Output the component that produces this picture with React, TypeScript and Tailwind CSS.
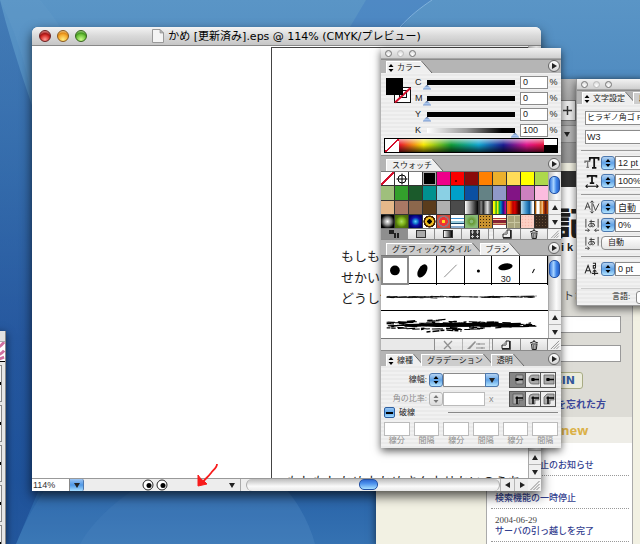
import { useState } from "react";
import type { ReactNode } from "react";
import clsx from "clsx";

const swatches = [
  { name: "None", fill: "bg-[linear-gradient(to_top_left,#fff_46%,#d40f2c_46%_54%,#fff_54%)]" },
  { name: "Registration", fill: "bg-white", target: true },
  { name: "White", fill: "bg-white" },
  { name: "Black", fill: "bg-black", selected: true },
  { name: "Magenta", fill: "bg-[#ee008a]" },
  { name: "Red", fill: "bg-[#fb0000]", dot: true },
  { name: "Dark red", fill: "bg-[#8a0b0b]" },
  { name: "Orange", fill: "bg-[#ff8000]" },
  { name: "Ochre", fill: "bg-[#ebb02c]" },
  { name: "Sand", fill: "bg-[#ffdc58]" },
  { name: "Yellow", fill: "bg-[#ffff00]" },
  { name: "Lime", fill: "bg-[#add84c]" },
  { name: "Sage", fill: "bg-[#9fbf7c]" },
  { name: "Green", fill: "bg-[#33a02c]" },
  { name: "Forest", fill: "bg-[#1b5a2b]" },
  { name: "Teal", fill: "bg-[#00918f]" },
  { name: "Sky", fill: "bg-[#8ad0e4]" },
  { name: "Cyan", fill: "bg-[#00a0c8]" },
  { name: "Blue", fill: "bg-[#0b50a2]" },
  { name: "Slate", fill: "bg-[#648285]" },
  { name: "Lavender", fill: "bg-[#9099c8]" },
  { name: "Purple", fill: "bg-[#821485]" },
  { name: "Orchid", fill: "bg-[#cc80bf]" },
  { name: "Pink", fill: "bg-[#fbbcdf]" },
  { name: "Peach", fill: "bg-[#e6b88a]" },
  { name: "Clay", fill: "bg-[#aa7864]" },
  { name: "Brown", fill: "bg-[#8c674c]" },
  { name: "Umber", fill: "bg-[#5a3c1c]" },
  { name: "Gray", fill: "bg-[#b0b0b0]" },
  { name: "Dark gray", fill: "bg-[#4b4b4b]" },
  { name: "Fade", fill: "bg-[linear-gradient(to_right,#fff,#000)]" },
  { name: "Steel", fill: "bg-[linear-gradient(to_right,#222,#888,#222,#999,#ddd,#777,#333)]" },
  { name: "Rainbow", fill: "bg-[linear-gradient(to_right,#ff0_10%,#2a2_25%,#fe0_35%,#0a4_50%,#08c_60%,#118_78%,#e08)]" },
  { name: "Fire", fill: "bg-[linear-gradient(to_right,#e63,#f60_20%,#b00_45%,#d00_60%,#400_90%)]" },
  { name: "Chrome", fill: "bg-[linear-gradient(to_right,#bde,#3a8fc8_40%,#0b5a9a_65%,#fff_90%)]" },
  { name: "Copper", fill: "bg-[linear-gradient(to_right,#a50_5%,#fff_15%_30%,#b60_45%,#fda_55%,#c50_65%,#611_80%,#b50)]" },
  { name: "White glow", fill: "bg-[radial-gradient(circle,#fff,#888_40%,#000_75%)]" },
  { name: "Green glow", fill: "bg-[radial-gradient(circle,#ad6,#8b2_30%,#691_50%,#571_60%,#460)]" },
  { name: "Blue glow", fill: "bg-[radial-gradient(circle,#6cf,#17c_25%,#11a_45%,#006_75%)]" },
  { name: "Sunflower", fill: "bg-[radial-gradient(circle,#000_22%,#eb2_26%_46%,#420_50%_64%,#fff_68%)]" },
  { name: "Flower", fill: "bg-[radial-gradient(circle,#fd2_15%,#e33_22%_45%,#789_50%,#d43_75%)]" },
  { name: "Stripes", fill: "bg-[linear-gradient(#fff_22%,#3a8fd0_22%_34%,#fff_34%_44%,#9cd_44%_64%,#146_64%_72%,#fff_72%_82%,#8ac_82%)]" },
  { name: "Leaves", fill: "bg-[radial-gradient(circle,#8b7_15%,#693_25%,#7a5_45%,#8b7_65%)]" },
  { name: "Leopard", fill: "bg-[radial-gradient(circle,#33210c_35%,#c8922f_45%)] bg-[size:3px_3px]" },
  { name: "Border", fill: "bg-[linear-gradient(#fff_20%,#a33_20%_28%,#fda_28%_36%,#823_36%_62%,#da7_62%_70%,#a44_70%_78%,#fff_78%)]" },
  { name: "Tiles", fill: "bg-[linear-gradient(#c9c6a0_1px,transparent_1px),linear-gradient(to_right,#c9c6a0_1px,#a9a57c_1px)] bg-[size:7px_7px]" },
  { name: "Blossom", fill: "bg-[radial-gradient(circle,#f6b7ab_30%,#fccfc4_50%)] bg-[size:3px_3px]" },
  { name: "Bark", fill: "bg-[radial-gradient(circle,#69503a_25%,#37271c_45%)] bg-[size:3px_3px]" },
];

const news = [
  { date: "2004-07-12", title: "サービス停止のお知らせ" },
  { date: "2004-07-03", title: "検索機能の一時停止" },
  { date: "2004-06-29", title: "サーバの引っ越しを完了" },
];

const dashLabels = ["線分", "間隔", "線分", "間隔", "線分", "間隔"];

// rough strokes used as artwork for the two art brushes
function roughStroke(count: number, width: number, spread: number, seed: number) {
  let s = seed;
  const rnd = () => {
    s = (s * 16807) % 2147483647;
    return s / 2147483647;
  };
  let d = "";
  for (let i = 0; i < count; i++) {
    const t = rnd();
    const x = t * width;
    const half = spread * (0.35 + 0.65 * Math.sin(Math.PI * Math.min(1, t + 0.12)));
    const y = 10 + (rnd() - 0.5) * 2 * half;
    const len = 2 + rnd() * 9;
    d += `M${x.toFixed(1)} ${y.toFixed(1)}l${len.toFixed(1)} ${(rnd() - 0.6).toFixed(1)}`;
  }
  return d;
}

function Triangle({ dir = "down" }: { dir?: "up" | "down" | "left" | "right" }) {
  const paths = {
    up: "M1 6L4 1L7 6Z",
    down: "M1 2L4 7L7 2Z",
    left: "M6 1L1 4L6 7Z",
    right: "M2 1L7 4L2 7Z",
  };
  return (
    <svg viewBox="0 0 8 8" className="w-2 h-2" aria-hidden="true">
      <path d={paths[dir]} fill="#222" />
    </svg>
  );
}

function UpDown({ className }: { className?: string }) {
  return (
    <svg viewBox="0 0 6 10" className={clsx("w-[6px] h-[10px] shrink-0", className)} aria-hidden="true">
      <path d="M0.5 4L3 1L5.5 4ZM0.5 6L3 9L5.5 6Z" fill="currentColor" />
    </svg>
  );
}

function Stepper({ label, disabled }: { label: string; disabled?: boolean }) {
  return (
    <button
      aria-label={label}
      disabled={disabled}
      className={clsx(
        "w-[14px] h-[14px] shrink-0 rounded-[3px] border flex items-center justify-center",
        disabled
          ? "border-[#b5b5b5] bg-[linear-gradient(#f4f4f4,#dcdcdc)] text-[#777]"
          : "border-[#4d78ae] bg-[linear-gradient(#b5d3f2,#5fa2e6_50%,#b3e4ff)] text-black"
      )}
    >
      <UpDown />
    </button>
  );
}

function PanelTitle() {
  return (
    <div className="h-[11px] flex items-center gap-[5px] pl-1 bg-[linear-gradient(#f2f2f2,#cfcfcf)] border-b border-[#a5a5a5]">
      {["Close", "Minimize", "Zoom"].map((name) => (
        <button
          key={name}
          aria-label={name}
          className={clsx(
            "w-[7px] h-[7px] rounded-full border bg-[radial-gradient(circle_at_50%_80%,#fff,#d2d2d2)]",
            name === "Minimize" ? "border-[#bbb]" : "border-[#777]"
          )}
        />
      ))}
    </div>
  );
}

function Tab({ label, active, arrows }: { label: string; active?: boolean; arrows?: boolean }) {
  return (
    <button role="tab" aria-selected={!!active} className="flex items-end shrink-0 h-[12px] -mr-1">
      <span
        className={clsx(
          "flex items-center gap-[3px] h-[12px] text-[8px] leading-[12px] text-[#222] border-t border-l border-white whitespace-nowrap",
          arrows ? "pl-[1px]" : "pl-[5px]",
          active ? "bg-[#efefef]" : "bg-[#cdcdcd]"
        )}
      >
        {arrows && <UpDown className="text-black" />}
        {label}
      </span>
      <svg viewBox="0 0 12 12" className="w-[12px] h-[12px]" aria-hidden="true">
        <path d="M0 0H1L11 12H0Z" fill={active ? "#efefef" : "#cdcdcd"} />
        <path d="M0.5 0L11 12" stroke="#666" strokeWidth="1" />
      </svg>
    </button>
  );
}

function TabStrip({ children, tall }: { children: ReactNode; tall?: boolean }) {
  return (
    <div
      className={clsx(
        "flex items-end bg-[#b5b5b5] border-t border-[#8b8b8b] pl-[5px]",
        tall ? "h-[16px]" : "h-[14px]"
      )}
    >
      <div role="tablist" className="flex flex-1 min-w-0">
        {children}
      </div>
      <button
        aria-label="Panel menu"
        className="w-[12px] h-[12px] shrink-0 mr-[1px] mb-[1px] rounded-full border border-[#666] bg-[linear-gradient(#fff,#d5d5d5)] flex items-center justify-center"
      >
        <Triangle dir="right" />
      </button>
    </div>
  );
}

function VScroll({ thumb }: { thumb: string }) {
  return (
    <div className="w-[13px] shrink-0 flex flex-col bg-[linear-gradient(to_right,#c4c4c4,#fbfbfb_60%,#e2e2e2)] border-l border-[#a9a9a9]">
      <div className="flex-1 pt-1">
        <div
          className={clsx(
            "w-[11px] rounded-[5px] border border-[#2352a5] bg-[linear-gradient(to_right,#3a7be0,#a8d4ff_40%,#3f86ea_70%,#2a62c8)]",
            thumb
          )}
        />
      </div>
      <button aria-label="Scroll up" className="h-[14px] flex items-center justify-center bg-[#f0f0f0] border-t border-[#b5b5b5]">
        <Triangle dir="up" />
      </button>
      <button aria-label="Scroll down" className="h-[14px] flex items-center justify-center bg-[#f0f0f0] border-t border-[#b5b5b5]">
        <Triangle dir="down" />
      </button>
    </div>
  );
}

function Grip() {
  return (
    <svg viewBox="0 0 12 12" className="w-[13px] h-full shrink-0 bg-[#f3f3f3]" aria-hidden="true">
      <path d="M2 11L11 2M5 11L11 5M8 11L11 8" stroke="#888" strokeWidth="1" />
    </svg>
  );
}

const newIcon = (
  <svg viewBox="0 0 10 10" className="w-[10px] h-[10px]" aria-hidden="true">
    <path d="M1 5V8.500H8.500V1H5V5Z" fill="#eee" stroke="#222" />
    <path d="M1 5L5 1V5Z" fill="#999" />
    <path d="M1 9H9V1" stroke="#222" strokeWidth="1.500" fill="none" />
  </svg>
);

const trashIcon = (
  <svg viewBox="0 0 10 10" className="w-[10px] h-[10px]" aria-hidden="true">
    <path d="M1 3L5 1.500L9 3M4 1H6" stroke="#222" fill="none" />
    <path d="M2.500 4H8L7.300 9.500H3.200Z" fill="#ddd" stroke="#222" />
    <path d="M4.300 5V9M6.100 5V9" stroke="#333" strokeWidth="0.8" />
  </svg>
);

function ToolButton({ label, pressed, disabled, children }: { label: string; pressed?: boolean; disabled?: boolean; children: ReactNode }) {
  return (
    <button
      aria-label={label}
      disabled={disabled}
      className={clsx(
        "flex-1 flex items-center justify-center border-r border-[#8f8f8f]",
        pressed ? "bg-[#8e8e8e]" : "bg-[linear-gradient(#f5f5f5,#dedede)]",
        disabled && "opacity-60"
      )}
    >
      {children}
    </button>
  );
}

function ColorSection() {
  const [cmyk, setCmyk] = useState({ C: 0, M: 0, Y: 0, K: 100 });

  return (
    <div className="pt-[1px] pb-[2px] px-[3px]">
      <div className="flex">
        <svg viewBox="0 0 26 26" className="w-[26px] h-[26px] mt-1 ml-[2px] shrink-0" aria-hidden="true">
          <rect x="8.5" y="9.5" width="16" height="15" fill="#fff" stroke="#111" />
          <rect x="13.5" y="12.500" width="7" height="7" fill="#fff" stroke="#111" />
          <path d="M9 24.500L24.500 10" stroke="#d40f2c" strokeWidth="2" />
          <rect width="17" height="17" fill="#000" />
        </svg>
        <div className="flex-1 min-w-0 pl-[3px]">
          {(Object.keys(cmyk) as (keyof typeof cmyk)[]).map((key) => (
            <div key={key} className="h-[16px] flex items-center text-[9px] leading-[12px] text-[#222]">
              <label htmlFor={`num-${key}`} className="w-[8px]">
                {key}
              </label>
              <input
                type="range"
                aria-label={key}
                value={cmyk[key]}
                onChange={(e) => setCmyk({ ...cmyk, [key]: Number(e.target.value) })}
                className={clsx(
                  "appearance-none flex-1 min-w-0 h-[10px] mt-[5px] bg-no-repeat bg-top bg-[size:calc(100%-8px)_5px]",
                  "[&::-webkit-slider-runnable-track]:h-[10px]",
                  "[&::-webkit-slider-thumb]:appearance-none [&::-webkit-slider-thumb]:w-[8px] [&::-webkit-slider-thumb]:h-[5px] [&::-webkit-slider-thumb]:mt-[5px]",
                  "[&::-webkit-slider-thumb]:bg-[linear-gradient(#5c74a0,#a9c6ee_50%,#6f8fc4)] [&::-webkit-slider-thumb]:[clip-path:polygon(50%_0,100%_80%,100%_100%,0_100%,0_80%)]",
                  key === "K"
                    ? "bg-[linear-gradient(to_right,#fff,#999_45%,#000_85%)]"
                    : "bg-[linear-gradient(#000,#000)]"
                )}
              />
              <input
                id={`num-${key}`}
                value={cmyk[key]}
                onChange={(e) => setCmyk({ ...cmyk, [key]: Number(e.target.value) || 0 })}
                className="w-[28px] h-[13px] ml-[1px] pl-[2px] bg-white border border-[#8b8b8b] text-[9px] leading-[11px]"
              />
              <span className="w-[9px] ml-[1px] shrink-0 text-center">%</span>
            </div>
          ))}
        </div>
      </div>
      <div className="h-[15px] flex border border-black bg-black">
        <div className="w-[14px] bg-[linear-gradient(to_top_left,#fff_46%,#d40f2c_46%_54%,#fff_54%)]" />
        <div className="flex-1 bg-[linear-gradient(to_bottom,rgba(255,255,255,0.6),transparent_45%,rgba(0,0,0,0.7)),linear-gradient(to_right,#e8102a,#f6e800_17%,#119a36_36%,#10a5cf_55%,#1a1a90_72%,#e0168c_88%,#e6103a)]" />
        <div className="w-[13px] h-[6px] bg-white" />
      </div>
    </div>
  );
}

function SwatchSection() {
  return (
    <>
      <div className="h-[57px] flex border-t border-[#777]">
        <div className="flex-1 grid grid-cols-12 grid-rows-4 gap-px bg-[#333]">
          {swatches.map((s) => (
            <button
              key={s.name}
              aria-label={s.name}
              className={clsx("flex items-center justify-center", s.fill, s.selected && "border border-[#aaa]")}
            >
              {s.target && (
                <svg viewBox="0 0 12 12" className="w-[12px] h-[12px]" aria-hidden="true">
                  <circle cx="6" cy="6" r="4" fill="none" stroke="#000" />
                  <path d="M6 0.5V11.5M0.5 6H11.5" stroke="#000" />
                </svg>
              )}
              {s.dot && <span className="w-[2px] h-[2px] mt-1 mr-1 bg-[#700]" />}
            </button>
          ))}
        </div>
        <VScroll thumb="h-[18px]" />
      </div>
      <div className="h-[11px] flex border-t border-[#777]">
        <ToolButton label="Show all swatches" pressed>
          <svg viewBox="0 0 12 10" className="w-[12px] h-[10px]" aria-hidden="true">
            <path d="M1 1H6V5H1ZM6 4H8V9H6ZM9 4H11V9H9Z" fill="#222" />
          </svg>
        </ToolButton>
        <ToolButton label="Show color swatches">
          <span className="w-[10px] h-[8px] border border-[#333] bg-[#aaa]" />
        </ToolButton>
        <ToolButton label="Show gradient swatches">
          <span className="w-[10px] h-[8px] border border-[#333] bg-[linear-gradient(to_right,#fff,#000)]" />
        </ToolButton>
        <ToolButton label="Show pattern swatches">
          <svg viewBox="0 0 10 9" className="w-[10px] h-[9px]" aria-hidden="true">
            <rect width="10" height="9" fill="#333" />
            <path d="M1 2H4M6 2H9M2.5 0V4M7.5 0V4M1 6.5H4M6 6.5H9M2.5 5V8M7.5 5V8" stroke="#ccc" />
          </svg>
        </ToolButton>
        <span className="w-[5px] border-r border-[#8f8f8f]" />
        <ToolButton label="New swatch">{newIcon}</ToolButton>
        <ToolButton label="Delete swatch">{trashIcon}</ToolButton>
        <Grip />
      </div>
    </>
  );
}

const brushTips = [
  { name: "Round 12", art: <circle cx="11" cy="11.500" r="4.500" /> , size: "" },
  { name: "Oval 12", art: <ellipse cx="13" cy="14" rx="4" ry="7" transform="rotate(30 13 14)" /> },
  { name: "Flat 12", art: <path d="M7 20L19 8" stroke="#777" strokeWidth="0.8" /> },
  { name: "Round 3", art: <circle cx="13" cy="14" r="1.5" /> },
  { name: "Oval 30", art: <ellipse cx="13" cy="10" rx="7" ry="3.2" transform="rotate(-10 13 10)" />, size: "30" },
  { name: "Flat 3", art: <path d="M12 16L14 12" stroke="#111" /> },
];

function BrushSection() {
  return (
    <>
      <div className="h-[83px] flex border-t border-[#777] bg-white">
        <div className="flex-1 min-w-0 flex flex-col">
          <div className="h-[27px] grid grid-cols-6">
            {brushTips.map((b, i) => (
              <button
                key={b.name}
                aria-label={b.name}
                className={clsx(
                  "relative flex justify-center",
                  i === 0 ? "border-2 border-[#8a8a8a]" : "border-r border-black"
                )}
              >
                <svg viewBox={i === 0 ? "0 0 22 23" : "0 0 26 27"} className="w-full h-full" aria-hidden="true">
                  {b.art}
                </svg>
                {b.size && <span className="absolute bottom-0 text-[9px] leading-[11px] text-[#222]">{b.size}</span>}
              </button>
            ))}
          </div>
          <button aria-label="Charcoal fine" className="h-[28px] border-t border-b border-black px-[5px]">
            <svg viewBox="0 0 156 20" className="w-full h-[20px]" aria-hidden="true">
              <path d="M0 10.500L60 9.500L100 10L150 9" stroke="#000" strokeWidth="0.8" strokeDasharray="9 1 14 1 5 1" fill="none" />
              <path d={roughStroke(50, 144, 0.9, 77)} stroke="#000" strokeWidth="0.7" />
            </svg>
          </button>
          <button aria-label="Charcoal" className="flex-1 px-[5px]">
            <svg viewBox="0 0 156 20" className="w-full h-[20px]" aria-hidden="true">
              <path d="M1 11L20 9L60 8L110 8L140 9L128 12L90 11.500L50 12L30 11Z" fill="#000" />
              <path d={roughStroke(150, 143, 5, 4242)} stroke="#000" strokeWidth="1.1" />
              <path d="M40 17L60 15L75 16" stroke="#000" strokeWidth="1.500" strokeDasharray="4 2 7 1" fill="none" />
            </svg>
          </button>
        </div>
        <VScroll thumb="h-[18px]" />
      </div>
      <div className="h-[12px] flex border-t border-[#777]">
        <span className="flex-[2] bg-[#e9e9e9] border-r border-[#8f8f8f]" />
        <ToolButton label="Remove brush stroke" disabled>
          <svg viewBox="0 0 12 10" className="w-[12px] h-[10px]" aria-hidden="true">
            <path d="M2 1L9 9M10 1L2 9" stroke="#555" strokeWidth="1.3" />
          </svg>
        </ToolButton>
        <ToolButton label="Options of selected object" disabled>
          <svg viewBox="0 0 20 10" className="w-[20px] h-[10px]" aria-hidden="true">
            <path d="M1 9L9 1L10 2L4 9Z" fill="#555" />
            <path d="M10 4H19M10 8H19M13 3V5M16 7V9" stroke="#555" />
          </svg>
        </ToolButton>
        <span className="w-[3px] border-r border-[#8f8f8f]" />
        <ToolButton label="New brush">{newIcon}</ToolButton>
        <ToolButton label="Delete brush">{trashIcon}</ToolButton>
        <Grip />
      </div>
    </>
  );
}

function CapIcon({ kind, corner }: { kind: number; corner?: boolean }) {
  const outlines = corner
    ? ["M2 2H12V8H8V12H2Z", "M6 2H12V8H8V12H2V6Q2 2 6 2Z", "M5 2H12V8H8V12H2V5Z"]
    : ["M5 2H12V11H5Z", "M12 2H6Q2 2 2 6.500Q2 11 6 11H12Z", "M2 2H12V11H2Z"];
  return (
    <svg viewBox="0 0 13 13" className="w-[13px] h-[13px]" aria-hidden="true">
      <path d={outlines[kind]} fill="#aaa" stroke="#555" strokeWidth="0.7" />
      {corner ? (
        <path d="M6 12V6H12M4.500 6H8M6 4.500V8" stroke="#000" strokeWidth="1.500" fill="none" />
      ) : (
        <path d="M5 6.500H12M4.500 6.500H7.500" stroke="#000" strokeWidth="1.500" />
      )}
      {!corner && <rect x="4.500" y="5" width="3" height="3" fill="#000" />}
    </svg>
  );
}

function CapGroup({ names, corner }: { names: string[]; corner?: boolean }) {
  return (
    <div className="ml-auto mr-[2px] flex border border-[#555] bg-[#eee]">
      {names.map((name, i) => (
        <button
          key={name}
          aria-label={name}
          className={clsx(
            "w-[15px] h-[14px] flex items-center justify-center",
            i > 0 && "border-l border-[#555]",
            i === 0 ? "bg-[#858585]" : "bg-[#ececec]"
          )}
        >
          <CapIcon kind={i} corner={corner} />
        </button>
      ))}
    </div>
  );
}

function StrokeSection() {
  return (
    <div className="pt-[5px] pb-[2px] px-[3px] text-[8px] leading-[10px] text-[#222]">
      <div className="flex items-center h-[17px]">
        <label htmlFor="weight" className="w-[45px] pr-[2px] text-right">線幅:</label>
        <Stepper label="Change stroke weight" />
        <div className="relative w-[56px] h-[14px]">
          <select id="weight" className="appearance-none w-full h-full bg-white border border-[#8b8b8b] rounded-r-[3px]">
            <option></option>
            <option>1 pt</option>
          </select>
          <span className="pointer-events-none absolute right-0 top-0 w-[14px] h-[14px] rounded-r-[3px] border border-[#4d78ae] bg-[linear-gradient(#b5d3f2,#5fa2e6_50%,#b3e4ff)] flex items-center justify-center">
            <Triangle />
          </span>
        </div>
        <CapGroup names={["Butt cap", "Round cap", "Projecting cap"]} />
      </div>
      <div className="flex items-center h-[17px] mt-[2px] text-[#8b8b8b]">
        <label htmlFor="miter" className="w-[45px] pr-[2px] text-right">角の比率:</label>
        <Stepper label="Change miter limit" disabled />
        <input id="miter" disabled className="w-[42px] h-[14px] bg-white border border-[#bbb]" />
        <span className="ml-1 text-[9px]">x</span>
        <CapGroup names={["Miter join", "Round join", "Bevel join"]} corner />
      </div>
      <div className="flex items-center h-[11px]">
        <input
          id="dashed"
          type="checkbox"
          defaultChecked
          className="appearance-none w-[11px] h-[11px] rounded-[2px] border border-[#2f5f9f] bg-[linear-gradient(#000,#000),linear-gradient(#9cc9f5,#5aa2e8_50%,#a6dcff)] bg-[size:7px_2px,100%_100%] bg-center bg-no-repeat"
        />
        <label htmlFor="dashed" className="ml-1">破線</label>
        <span className="ml-auto w-[110px] border-t border-[#888]" />
      </div>
      <div className="grid grid-cols-6 gap-1 mt-1 text-[#8b8b8b]">
        {dashLabels.map((label, i) => (
          <label key={i} className="flex flex-col items-center">
            <input disabled className="w-full h-[14px] bg-white border border-[#bbb]" />
            {label}
          </label>
        ))}
      </div>
    </div>
  );
}

function CharRow({ id, label, icon, value, dropdown }: { id: string; label: string; icon: ReactNode; value: string; dropdown?: boolean }) {
  return (
    <div className="h-[18px] flex items-center">
      <label htmlFor={id} aria-label={label} className="w-[17px] shrink-0">
        <svg viewBox="0 0 18 16" className="w-[16px] h-[14px]" aria-hidden="true">
          {icon}
        </svg>
      </label>
      {dropdown ? (
        <select id={id} className="appearance-none w-[60px] h-[14px] pl-[6px] bg-[linear-gradient(#fff,#e4e4e4)] border border-[#8b8b8b] rounded-[4px] text-[8px] leading-[12px]">
          <option>{value}</option>
        </select>
      ) : (
        <>
          <Stepper label={`Change ${label}`} />
          <input id={id} defaultValue={value} className="w-[46px] h-[14px] pl-[2px] bg-white border border-[#8b8b8b] text-[9px] leading-[12px]" />
        </>
      )}
    </div>
  );
}

const kanaIcon = "M2 1V11M16 1V11M6 4H12M8 2V10M11 6C9 11 5 11 5 8C6 5 12 6 12 8C12 10 10 10 9 10M1 14H6M4 12L6 14L4 16";

function CharacterPanel() {
  return (
    <section className="absolute left-[576px] top-[79px] w-[180px] bg-[repeating-linear-gradient(#f1f1f1_0_2px,#eaeaea_2px_4px)] shadow-[0_3px_8px_rgba(0,0,0,0.6)] border-l border-b border-[#999] text-[#222]">
      <PanelTitle />
      <TabStrip>
        <Tab label="文字設定" active arrows />
        <Tab label="段落設定" />
      </TabStrip>
      <div className="px-1 pt-[7px]">
        <div className="px-1 flex flex-col gap-[5px]">
          <select aria-label="Font" className="appearance-none w-[120px] h-[14px] pl-[1px] bg-white border border-[#8b8b8b] text-[8px] leading-[12px]">
            <option>ヒラギノ角ゴ Pro</option>
          </select>
          <select aria-label="Style" className="appearance-none w-[120px] h-[14px] pl-[1px] bg-white border border-[#8b8b8b] text-[9px] leading-[12px]">
            <option>W3</option>
          </select>
        </div>
        <hr className="mt-[6px] border-[#999]" />
        <div className="pl-[3px] pt-[3px] pb-[4px]">
          <CharRow id="size" label="size" value="12 pt" icon={<><path d="M1 8V6H7M4 6V13M2.500 13H5.500" stroke="#777" strokeWidth="1.500" fill="none" /><path d="M6.500 5V2H16.500V5M11.500 2V13M9 13.500H14" stroke="#111" strokeWidth="2" fill="none" /></>} />
          <CharRow id="hscale" label="horizontal scale" value="100%" icon={<><path d="M4 4V2H14V4M9 2V10.500M6.500 10.500H11.500" stroke="#111" strokeWidth="2" fill="none" /><path d="M2 14H16M4 12L2 14L4 16M14 12L16 14L14 16" stroke="#111" strokeWidth="1.200" fill="none" /></>} />
        </div>
        <hr className="border-[#999]" />
        <div className="pl-[3px] pt-[3px] pb-[4px]">
          <CharRow id="kern" label="kerning" value="自動" icon={<path d="M1 11L4 3L7 11M2 8H6M10 4L13 12L17 4M9 1V15M7 3L9 1L11 3M7 13L9 15L11 13" stroke="#333" fill="none" />} />
          <CharRow id="tsume" label="tsume" value="0%" icon={<path d={`${kanaIcon}M17 14H12M14 12L12 14L14 16`} stroke="#333" fill="none" />} />
          <CharRow id="aki" label="spacing before" value="自動" dropdown icon={<path d={kanaIcon} stroke="#333" fill="none" />} />
        </div>
        <hr className="border-[#999]" />
        <div className="pl-[3px] pt-[3px] pb-[10px]">
          <CharRow id="shift" label="baseline shift" value="0 pt" icon={<path d="M1 13L4.500 4L8 13M2 10H7M10 1.500H13V7M13 4H10.500V7H13M12 9V15M10 11L12 9L14 11M9 13H16" stroke="#222" strokeWidth="1.200" fill="none" />} />
        </div>
        <hr className="border-[#ccc]" />
        <div className="h-[16px] flex items-center pl-[31px] text-[8px] leading-[12px]">
          <label htmlFor="lang">言語:</label>
          <select id="lang" className="appearance-none w-[70px] h-[13px] ml-[6px] px-1 bg-white border border-[#8b8b8b] rounded-[3px]">
            <option>日本語</option>
          </select>
        </div>
      </div>
    </section>
  );
}

function BrowserWindow() {
  return (
    <section className="absolute left-[376px] top-[79px] -right-1 bottom-0 flex flex-col overflow-hidden bg-[#f2f1e3] shadow-[0_2px_8px_rgba(0,0,0,0.6)]">
      <div className="h-[84px] bg-[linear-gradient(#bbb,#a8a8a8_20px,#9a9a9a)] pt-[21px] pl-[182px] flex flex-col items-start gap-1">
        <button aria-label="Add bookmark" className="w-[18px] h-[21px] flex items-center justify-center bg-[#eee] border border-[#777]">
          <svg viewBox="0 0 9 9" className="w-[9px] h-[9px]" aria-hidden="true">
            <path d="M4.500 0V9M0 4.500H9" stroke="#333" strokeWidth="1.500" />
          </svg>
        </button>
        <button aria-label="Bookmarks" className="w-[18px] h-[18px] flex items-center justify-center bg-[#b5b5b5] border-y border-[#888]">
          <Triangle />
        </button>
      </div>
      <div className="mt-2 w-[147px] ml-[110px] flex-1 flex flex-col border-x border-[#aaa] bg-white">
        <div className="h-[16px] shrink-0 bg-[#333]" />
        <div className="h-[93px] shrink-0 pt-[19px] pl-[69px] border-b border-[#ccc] text-[#222]">
          <p className="text-[32px] leading-[36px] font-black whitespace-nowrap">記</p>
          <p className="text-[11px] leading-[11px] font-bold pl-[5px]">i k i</p>
        </div>
        <form className="h-[137px] shrink-0 bg-[#dddcd6] pt-[9px] px-[11px] text-[9px] text-[#444] flex flex-col items-end">
          <label htmlFor="account" className="w-full text-[11px] leading-[15px] pl-[65px] whitespace-nowrap">トさん</label>
          <input id="account" className="w-full h-[17px] mt-[12px] bg-white border border-[#999]" />
          <input aria-label="Password" type="password" className="w-full h-[17px] mt-[12px] bg-white border border-[#999]" />
          <button type="button" className="self-start w-[50px] h-[17px] ml-[35px] mt-[10px] pr-[7px] text-right rounded-[3px] border border-[#a8ab84] bg-[#eceddc] text-[11px] leading-[14px] font-bold text-[#345a9c] font-[family-name:'DejaVu_Sans',sans-serif]">
            LOGIN
          </button>
          <a href="#forgot" className="mt-[8px] mr-[15px] text-[10px] leading-[16px] font-bold text-[#3b479a]">を忘れた方</a>
        </form>
        <h2 className="h-[26px] shrink-0 bg-[#eeede7] pl-[74px] text-[13px] leading-[26px] font-bold text-[#dbb148] font-[family-name:'Open_Sans',sans-serif]">
          new
        </h2>
        <ul className="font-[family-name:'Liberation_Serif','Noto_Sans_CJK_JP',serif] text-[9px] leading-[11px]">
          {news.map((item) => (
            <li key={item.date} className="h-[33px] ml-1 mr-[3px] pl-1 pt-[6px] border-b border-dotted border-[#999]">
              <p className="text-[#444]">{item.date}</p>
              <a href="#news" className="block text-[#33408f] font-medium">{item.title}</a>
            </li>
          ))}
        </ul>
      </div>
    </section>
  );
}

function DocumentWindow() {
  const [zoom, setZoom] = useState("114%");

  return (
    <section className="absolute left-[32px] top-[27px] w-[509px] flex flex-col rounded-t-[6px] bg-white shadow-[0_5px_12px_rgba(0,0,0,0.7)]">
      <header className="relative h-[19px] flex items-center justify-center rounded-t-[6px] border-b border-[#888] bg-[linear-gradient(#f4f4f4,#d9d9d9_50%,#c6c6c6)]">
        <div className="absolute left-[7px] flex gap-[6px]">
          <button aria-label="Close" className="w-[12px] h-[12px] rounded-full border border-[#6b1f1f] bg-[radial-gradient(circle_at_50%_85%,#ff9c94,#d52e2a_45%,#a51616_60%,#f3c4c0)]" />
          <button aria-label="Minimize" className="w-[12px] h-[12px] rounded-full border border-[#8a5a1c] bg-[radial-gradient(circle_at_50%_85%,#ffee80,#f5a82c_50%,#e08a16_65%,#fbe6bb)]" />
          <button aria-label="Zoom" className="w-[12px] h-[12px] rounded-full border border-[#35631c] bg-[radial-gradient(circle_at_50%_85%,#cbff8c,#6cc13a_50%,#459a1f_65%,#d8f5c0)]" />
        </div>
        <h1 className="flex items-center gap-1 text-[11px] leading-[17px] text-black whitespace-nowrap font-[family-name:'DejaVu_Sans','Noto_Sans_CJK_JP',sans-serif]">
          <svg viewBox="0 0 12 14" className="w-[12px] h-[14px]" aria-hidden="true">
            <path d="M0.500 0.500H8L11.500 4V13.500H0.500Z" fill="#f4f4f4" stroke="#999" />
            <path d="M8 0.500V4H11.500Z" fill="#bbb" stroke="#888" strokeWidth="0.600" />
          </svg>
          かめ [更新済み].eps @ 114% (CMYK/プレビュー)
        </h1>
      </header>

      <div className="h-[432px] flex">
        <div className="flex-1 min-w-0 pl-[239px] pt-[1px] flex">
          <div className="flex-1 min-w-0 flex flex-col justify-between overflow-hidden border-t border-l border-[#444]">
            <p className="pt-[198px] pl-[69px] text-[13px] leading-[21px] text-[#222] whitespace-nowrap">
              もしもし
              <br />
              せかいの
              <br />
              どうして
            </p>
            <div className="h-[3px] overflow-hidden pl-[15px] text-[13px] leading-[14px] text-[#222] whitespace-nowrap">
              もしもしかめよかめさんよせかいのうち
            </div>
          </div>
        </div>
        <VScroll thumb="h-[18px]" />
      </div>

      <footer className="h-[13px] flex border-t border-[#999] bg-[#ededed]">
        <input
          aria-label="Zoom level"
          value={zoom}
          onChange={(e) => setZoom(e.target.value)}
          className="w-[38px] pl-[1px] bg-white border-r border-[#888] text-[9px] leading-[10px] text-[#333]"
        />
        <button aria-label="Zoom presets" className="w-[14px] flex items-center justify-center rounded-r-[2px] bg-[linear-gradient(#9cc5f3,#4f98e6_50%,#a8deff)] border-r border-[#4d78ae]">
          <Triangle />
        </button>
        <div className="w-[157px] flex items-center pl-[58px] border-r border-[#aaa]">
          <svg viewBox="0 0 26 12" className="w-[26px] h-[12px]" aria-hidden="true">
            <circle cx="6" cy="6" r="5" fill="#fff" stroke="#222" />
            <circle cx="7" cy="6.500" r="2.500" />
            <circle cx="20" cy="6" r="5" fill="#fff" stroke="#222" />
            <circle cx="21" cy="6.500" r="2.500" />
          </svg>
          <button aria-label="Status display" className="ml-auto mr-[4px]">
            <Triangle />
          </button>
        </div>
        <div className="flex-1 ml-[5px] pl-[112px] rounded-full border-x border-[#aaa] bg-[linear-gradient(#bdbdbd,#fafafa_60%,#e8e8e8)]">
          <div className="w-[19px] h-[11px] rounded-[5px] border border-[#2352a5] bg-[linear-gradient(#2f69cf,#4e93ee_40%,#a8e0ff)]" />
        </div>
        <button aria-label="Scroll left" className="w-[14px] flex items-center justify-center border-l border-[#b5b5b5]">
          <Triangle dir="left" />
        </button>
        <button aria-label="Scroll right" className="w-[14px] flex items-center justify-center border-l border-[#b5b5b5]">
          <Triangle dir="right" />
        </button>
        <Grip />
      </footer>

      {/* hand-drawn pointer at the status bar */}
      <svg viewBox="0 0 22 26" className="absolute left-[165px] bottom-[2px] w-[22px] h-[26px]" aria-hidden="true">
        <path d="M20 1C20 5 16 7 14 10C11 14 8 16 5 20" stroke="#f81c1c" strokeWidth="1.800" fill="none" />
        <path d="M1 12L4 16L8 19L10 21L1 23Z" fill="#f81c1c" stroke="#f81c1c" />
      </svg>
    </section>
  );
}

export default function App() {
  return (
    <main className="relative w-full h-screen overflow-hidden bg-[linear-gradient(#5a95c6,#4682bb_30%,#2f62a8_62%,#2660a6_88%,#3572b2)] font-[family-name:'Liberation_Sans','Noto_Sans_CJK_JP',sans-serif]">
      <svg viewBox="0 0 640 544" preserveAspectRatio="none" className="absolute inset-0 w-full h-full" aria-hidden="true">
        <defs>
          <linearGradient id="edge" x1="0" y1="0" x2="0" y2="1">
            <stop offset="0" stopColor="#2c62a6" stopOpacity="0.5" />
            <stop offset="1" stopColor="#17458f" stopOpacity="0.6" />
          </linearGradient>
        </defs>
        <path d="M0 0C15 60 40 130 60 180V440L16 544H0Z" fill="url(#edge)" />
        <path d="M40 0C50 12 56 20 60 27H32V100C26 60 12 25 0 0Z" fill="#7db0d8" opacity="0.1" />
        <path d="M16 544C28 515 38 500 46 488H136C110 505 90 525 80 544Z" fill="#6fa6d6" opacity="0.12" />
        <path d="M80 544C90 525 110 505 136 488H285C300 505 310 525 315 544Z" fill="#6fa6d6" opacity="0.2" />
        <path d="M350 27L366 0H432C420 8 410 16 402 27Z" fill="#3f78c0" opacity="0.4" />
        <path d="M400 27C410 16 420 8 432 0" stroke="#9cc8ea" opacity="0.6" fill="none" />
      </svg>

      <BrowserWindow />
      <DocumentWindow />
      <CharacterPanel />

      {/* Color / swatches / brushes / stroke */}
      <section className="absolute left-[381px] top-[48px] w-[180px] bg-[repeating-linear-gradient(#f1f1f1_0_2px,#eaeaea_2px_4px)] shadow-[0_3px_8px_rgba(0,0,0,0.65)]">
        <PanelTitle />
        <TabStrip>
          <Tab label="カラー" active arrows />
        </TabStrip>
        <ColorSection />
        <TabStrip tall>
          <Tab label="スウォッチ" active />
        </TabStrip>
        <SwatchSection />
        <TabStrip tall>
          <Tab label="グラフィックスタイル" />
          <Tab label="ブラシ" active />
        </TabStrip>
        <BrushSection />
        <TabStrip tall>
          <Tab label="線種" active arrows />
          <Tab label="グラデーション" />
          <Tab label="透明" />
        </TabStrip>
        <StrokeSection />
      </section>

      {/* Tool palette, mostly off the left edge */}
      <section className="absolute -left-[50px] top-[331px] bottom-0 w-[56px] flex flex-col bg-[#e6e6e6] border-r border-[#888] shadow-[0_2px_8px_rgba(0,0,0,0.6)]">
        <div className="h-[11px] shrink-0 bg-[#e2e2e2] border-b border-[#aaa]" />
        <svg viewBox="0 0 56 20" className="w-full h-[20px] shrink-0 bg-white border-b border-black" aria-hidden="true">
          <path d="M48 7Q52 5 56 0M48 14Q53 13 56 9M48 19L56 16" stroke="#cf6f9f" strokeWidth="3" fill="none" />
        </svg>
        {["Pen", "Brush", "Rotate", "Warp", "Graph", "Gradient"].map((tool) => (
          <button
            key={tool}
            aria-label={tool}
            className="h-[37px] shrink-0 mt-[3px] mr-[3px] flex items-center justify-end border border-[#888] bg-[#f4f4f4]"
          >
            <span className="w-[2px] h-[3px] bg-black" />
          </button>
        ))}
      </section>
    </main>
  );
}
